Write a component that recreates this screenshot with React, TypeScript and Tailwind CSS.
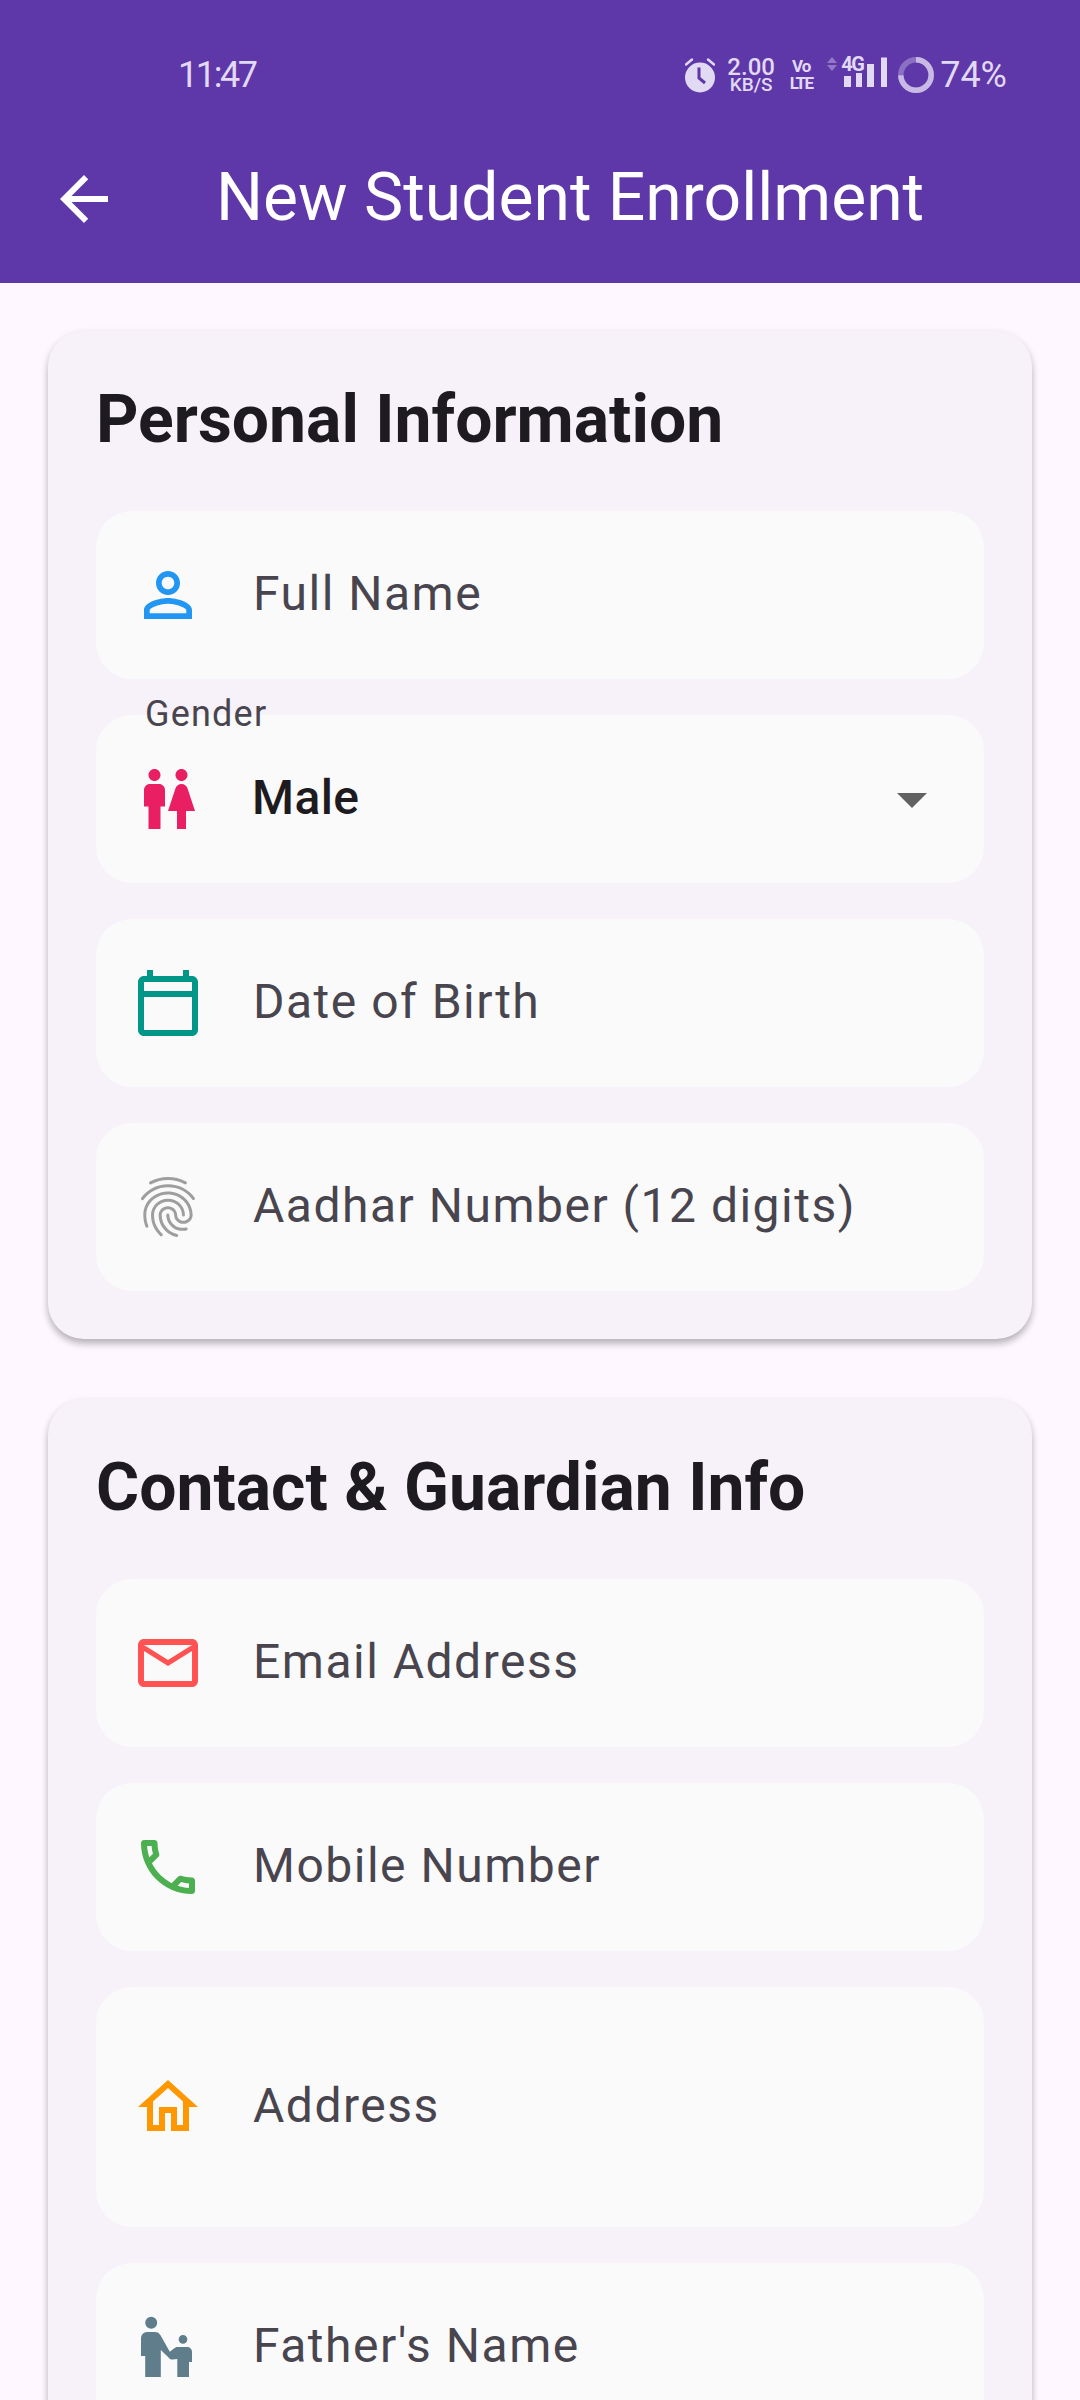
import React from 'react';

type IconProps = { d: string; className: string };

const Icon: React.FC<IconProps> = ({ d, className }) => (
    <svg viewBox="0 0 24 24" className={className} fill="currentColor">
        <path d={d} />
    </svg>
);

const icons = {
    back: 'M20 11H7.83l5.59-5.59L12 4l-8 8 8 8 1.41-1.41L7.83 13H20v-2z',
    person: 'M12 5.9c1.16 0 2.1.94 2.1 2.1s-.94 2.1-2.1 2.1S9.9 9.16 9.9 8s.94-2.1 2.1-2.1m0 9c2.97 0 6.1 1.46 6.1 2.1v1.1H5.9V17c0-.64 3.13-2.1 6.1-2.1M12 4C9.79 4 8 5.79 8 8s1.79 4 4 4 4-1.79 4-4-1.79-4-4-4zm0 9c-2.67 0-8 1.34-8 4v3h16v-3c0-2.66-5.33-4-8-4z',
    wc: 'M5.5 22v-7.5H4V9c0-1.1.9-2 2-2h3c1.1 0 2 .9 2 2v5.5H9.5V22h-4zM18 22v-6h3l-2.54-7.63C18.18 7.55 17.42 7 16.56 7h-.12c-.86 0-1.63.55-1.9 1.37L12 16h3v6h3zM7.5 6c1.11 0 2-.89 2-2s-.89-2-2-2-2 .89-2 2 .89 2 2 2zm9 0c1.11 0 2-.89 2-2s-.89-2-2-2-2 .89-2 2 .89 2 2 2z',
    calendar: 'M20 3h-1V1h-2v2H7V1H5v2H4c-1.1 0-2 .9-2 2v16c0 1.1.9 2 2 2h16c1.1 0 2-.9 2-2V5c0-1.1-.9-2-2-2zm0 2v3H4V5h16zM4 21V10h16v11H4z',
    fingerprint: 'M17.81 4.47c-.08 0-.16-.02-.23-.06C15.66 3.42 14 3 12.01 3c-1.98 0-3.86.47-5.58 1.41-.24.13-.54.04-.68-.2-.13-.24-.04-.55.2-.68C7.82 2.52 9.86 2 12.01 2c2.13 0 3.99.47 6.03 1.52.25.13.34.43.21.67-.09.18-.26.28-.44.28zM3.5 9.72c-.1 0-.2-.03-.29-.09-.23-.16-.28-.47-.12-.7.99-1.4 2.25-2.5 3.75-3.27C9.98 4.04 14 4.03 17.15 5.65c1.5.77 2.76 1.86 3.75 3.25.16.22.11.54-.12.7-.23.16-.54.11-.7-.12-.9-1.26-2.04-2.25-3.39-2.94-2.87-1.47-6.54-1.47-9.4.01-1.36.7-2.5 1.7-3.4 2.96-.08.14-.23.21-.39.21zm6.25 12.07c-.13 0-.26-.05-.35-.15-.87-.87-1.34-1.43-2.01-2.64-.69-1.23-1.05-2.73-1.05-4.34 0-2.97 2.54-5.39 5.66-5.39s5.66 2.42 5.66 5.39c0 .28-.22.5-.5.5s-.5-.22-.5-.5c0-2.42-2.09-4.39-4.66-4.39-2.57 0-4.66 1.97-4.66 4.39 0 1.44.32 2.77.93 3.85.64 1.15 1.08 1.64 1.85 2.42.19.2.19.51 0 .71-.11.1-.24.15-.37.15zm7.17-1.85c-1.19 0-2.24-.3-3.1-.89-1.49-1.01-2.38-2.65-2.38-4.39 0-.28.22-.5.5-.5s.5.22.5.5c0 1.41.72 2.74 1.94 3.56.71.48 1.54.71 2.54.71.24 0 .64-.03 1.04-.1.27-.05.53.13.58.41.05.27-.13.53-.41.58-.57.11-1.07.12-1.21.12zM14.91 22c-.04 0-.09-.01-.13-.02-1.59-.44-2.63-1.03-3.72-2.1-1.4-1.39-2.17-3.24-2.17-5.22 0-1.62 1.38-2.94 3.08-2.94 1.7 0 3.08 1.32 3.08 2.94 0 1.07.93 1.94 2.08 1.94s2.08-.87 2.08-1.94c0-3.77-3.25-6.83-7.25-6.83-2.84 0-5.44 1.58-6.61 4.03-.39.81-.59 1.76-.59 2.8 0 .78.07 2.01.67 3.61.1.26-.03.55-.29.64-.26.1-.55-.04-.64-.29-.49-1.31-.73-2.61-.73-3.96 0-1.2.23-2.29.68-3.24 1.33-2.79 4.28-4.6 7.51-4.6 4.55 0 8.25 3.51 8.25 7.83 0 1.62-1.38 2.94-3.08 2.94s-3.08-1.32-3.08-2.94c0-1.07-.93-1.94-2.08-1.94s-2.08.87-2.08 1.94c0 1.71.66 3.31 1.87 4.51.95.94 1.86 1.46 3.27 1.85.27.07.42.35.35.61-.05.23-.26.38-.47.38z',
    email: 'M22 6c0-1.1-.9-2-2-2H4c-1.1 0-2 .9-2 2v12c0 1.1.9 2 2 2h16c1.1 0 2-.9 2-2V6zm-2 0l-8 5-8-5h16zm0 12H4V8l8 5 8-5v10z',
    phone: 'M6.54 5c.06.89.21 1.76.45 2.59l-1.2 1.2c-.41-1.2-.67-2.47-.76-3.79h1.51m9.86 12.02c.85.24 1.72.39 2.6.45v1.49c-1.32-.09-2.59-.35-3.8-.75l1.2-1.19M7.5 3H4c-.55 0-1 .45-1 1 0 9.39 7.61 17 17 17 .55 0 1-.45 1-1v-3.49c0-.55-.45-1-1-1-1.24 0-2.45-.2-3.57-.57-.1-.04-.21-.05-.31-.05-.26 0-.51.1-.71.29l-2.2 2.2c-2.83-1.45-5.15-3.76-6.59-6.59l2.2-2.2c.28-.28.36-.67.25-1.02C8.7 6.45 8.5 5.25 8.5 4c0-.55-.45-1-1-1z',
    home: 'M12 5.69l5 4.5V18h-2v-6H9v6H7v-7.81l5-4.5M12 3L2 12h3v8h6v-6h2v6h6v-8h3L12 3z',
    guardian: 'M6.4 1.9a2 2 0 1 1 0 4 2 2 0 0 1 0-4zM17 8a1.45 1.45 0 1 1 0 2.9A1.45 1.45 0 0 1 17 8zM3 15V9a2 2 0 0 1 2-2h2.6c.8 0 1.5.4 1.9 1.1l3.1 5.5 1.4-1.1c.3-.3.7-.5 1.1-.5h3.2c1 0 1.7.7 1.7 1.6V17h-1v5h-3.9v-6l-1.6.2c-.6 0-1.1-.3-1.4-.8L9.6 13v9H4.4v-7H3z',
    dropdown: 'M7 10l5 5 5-5z',
};

type FieldProps = {
    icon: string;
    iconColor: string;
    label: string;
    tall?: boolean;
};

const Field: React.FC<FieldProps> = ({ icon, iconColor, label, tall }) => (
    <div className={`flex items-center rounded-[36px] bg-[#fafafa] pl-[36px] ${tall ? 'h-[240px]' : 'h-[168px]'}`}>
        <Icon d={icon} className={`h-[72px] w-[72px] shrink-0 ${iconColor}`} />
        <span className="mb-[2px] ml-[49px] text-[48px] leading-[64px] tracking-[1.5px] text-[#49454f]">{label}</span>
    </div>
);

const GenderField: React.FC = () => (
    <div className="relative flex h-[168px] items-center rounded-[36px] bg-[#fafafa] px-[36px]">
        <span className="absolute left-[49px] top-[-25px] text-[36px] leading-[48px] tracking-[1.2px] text-[#49454f]">Gender</span>
        <Icon d={icons.wc} className="h-[72px] w-[72px] shrink-0 text-[#e91e63]" />
        <span className="mb-[2px] ml-[48px] flex-1 text-[48px] font-medium leading-[64px] tracking-[0.4px] text-[#1d1b20]">Male</span>
        <Icon d={icons.dropdown} className="h-[72px] w-[72px] shrink-0 text-[#616161]" />
    </div>
);

const Section: React.FC<{ title: string; children: React.ReactNode }> = ({ title, children }) => (
    <section className="rounded-[36px] bg-[#f7f2fa] p-[48px] shadow-[0_5px_7px_rgba(0,0,0,0.24),0_2px_8px_rgba(0,0,0,0.07)]">
        <h2 className="mb-[52px] mt-[2px] text-[66px] font-bold leading-[78px] text-[#1d1b20]">{title}</h2>
        <div className="flex flex-col gap-[36px]">{children}</div>
    </section>
);

const StatusBar: React.FC = () => (
    <div className="flex h-[115px] items-center justify-between pl-[178px] pr-[73px] pt-[34px] text-[#e2d9f3]">
        <span className="text-[36px] leading-[40px] tracking-[-2.4px]">11:47</span>
        <div className="flex items-center">
            <svg viewBox="0 0 30 36" className="h-[36px] w-[30px]" fill="currentColor">
                <path d="M1 7.5 7 2.5" stroke="currentColor" strokeWidth="2.4" strokeLinecap="round" />
                <path d="M29 7.5 23 2.5" stroke="currentColor" strokeWidth="2.4" strokeLinecap="round" />
                <circle cx="15" cy="20.5" r="15" />
                <path d="M14 10.5v10.5l6 5" fill="none" stroke="#5e37a9" strokeWidth="3" />
            </svg>
            <div className="ml-[10px] flex w-[52px] flex-col items-center">
                <span className="text-[24px] font-medium leading-[20px]">2.00</span>
                <span className="text-[19px] font-medium leading-[16px]">KB/S</span>
            </div>
            <div className="ml-[13px] flex w-[22px] flex-col items-center">
                <span className="text-[17px] font-bold leading-[17px] tracking-[-1px]">Vo</span>
                <span className="text-[17px] font-bold leading-[17px] tracking-[-1.5px]">LTE</span>
            </div>
            <div className="relative ml-[15px] h-[36px] w-[60px]">
                <svg viewBox="0 0 60 36" className="h-[36px] w-[60px]" fill="currentColor">
                    <path d="M0 6 5 0l5 6zM0 8l5 6 5-6z" opacity="0.4" />
                    <rect x="17" y="19" width="7" height="11" />
                    <rect x="29" y="16" width="6" height="14" />
                    <rect x="40" y="7" width="7" height="23" />
                    <rect x="54" y="0.5" width="6" height="29.5" />
                </svg>
                <span className="absolute left-[14px] top-[-5px] text-[20px] font-bold leading-[24px] tracking-[-1.5px]">4G</span>
            </div>
            <svg viewBox="0 0 36 36" className="ml-[11px] h-[36px] w-[36px]" fill="none">
                <circle cx="18" cy="18" r="15.2" stroke="currentColor" strokeWidth="5.5" opacity="0.35" />
                <circle cx="18" cy="18" r="15.2" stroke="currentColor" strokeWidth="5.5" strokeDasharray="70.7 95.5" transform="rotate(-90 18 18)" opacity="0.7" />
            </svg>
            <span className="ml-[6px] text-[36px] leading-[40px]">74%</span>
        </div>
    </div>
);

const App: React.FC = () => (
    <div className="h-[2400px] overflow-hidden bg-[#fef7ff] font-['Roboto',sans-serif]">
        <header className="h-[283px] bg-[#5e37a9]">
            <StatusBar />
            <div className="flex h-[168px] items-center pl-[48px] text-white">
                <Icon d={icons.back} className="h-[72px] w-[72px] shrink-0" />
                <h1 className="mb-[2px] ml-[96px] text-[66px] leading-[88px]">New Student Enrollment</h1>
            </div>
        </header>
        <main className="flex flex-col gap-[60px] px-[48px] pt-[48px]">
            <Section title="Personal Information">
                <Field icon={icons.person} iconColor="text-[#2196f3]" label="Full Name" />
                <GenderField />
                <Field icon={icons.calendar} iconColor="text-[#009688]" label="Date of Birth" />
                <Field icon={icons.fingerprint} iconColor="text-[#9e9e9e]" label="Aadhar Number (12 digits)" />
            </Section>
            <Section title="Contact & Guardian Info">
                <Field icon={icons.email} iconColor="text-[#ff5252]" label="Email Address" />
                <Field icon={icons.phone} iconColor="text-[#4caf50]" label="Mobile Number" />
                <Field icon={icons.home} iconColor="text-[#ff9800]" label="Address" tall />
                <Field icon={icons.guardian} iconColor="text-[#607d8b]" label="Father's Name" />
            </Section>
        </main>
    </div>
);

export default App;
